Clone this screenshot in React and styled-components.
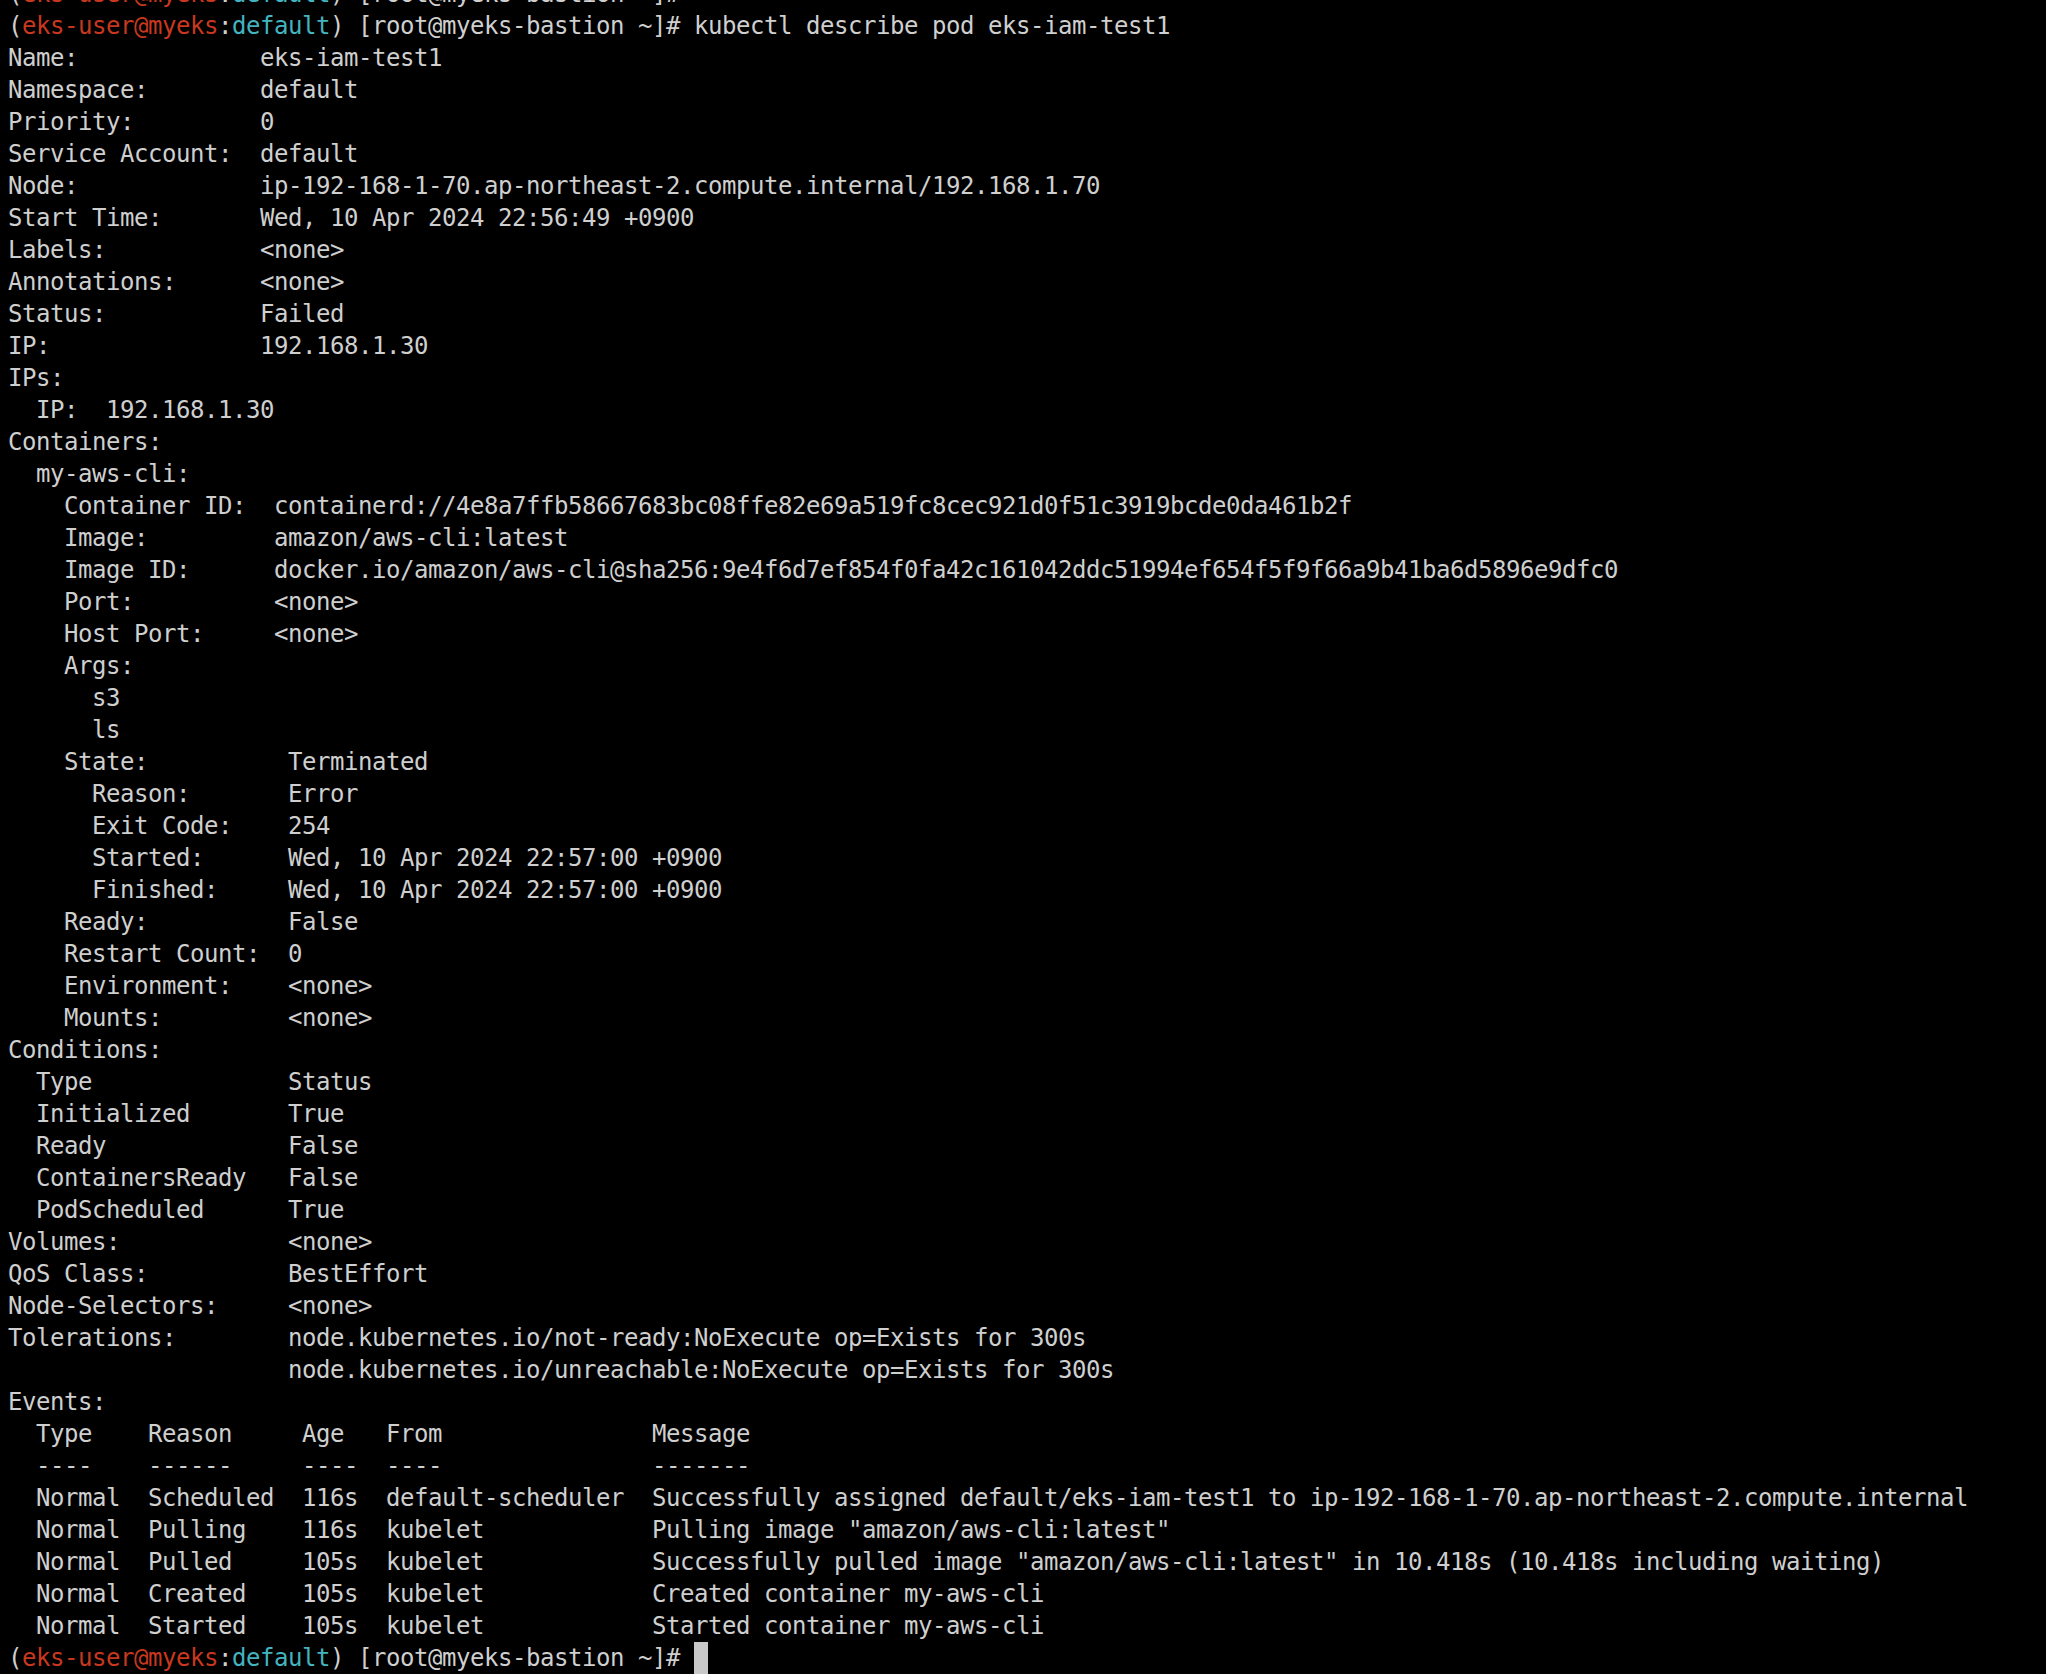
import React from 'react'
import styled, { createGlobalStyle } from 'styled-components'

const CELL = 14
const ROW = 32

const Global = createGlobalStyle`
  html, body {
    margin: 0;
    padding: 0;
    background: #000;
  }
`

const Screen = styled.main`
  box-sizing: border-box;
  height: 100vh;
  overflow: hidden;
  display: flex;
  flex-direction: column;
  justify-content: flex-end;
  padding: 0 8px;
  background: #000;
  color: #cfcfcf;
  font-family: "DejaVu Sans Mono", "Liberation Mono", monospace;
  font-size: 24px;
  letter-spacing: -0.449px;
  line-height: ${ROW}px;
`

const Line = styled.div`
  flex-shrink: 0;
  height: ${ROW}px;
  white-space: pre;
  padding-left: ${p => (p.$indent || 0) * CELL}px;
`

const Key = styled.span`
  display: inline-block;
  width: ${p => p.$cells * CELL}px;
`

const User = styled.span`
  color: #c8381f;
`

const Ctx = styled.span`
  color: #43b4bf;
`

const Cursor = styled.span`
  display: inline-block;
  vertical-align: top;
  width: ${CELL}px;
  height: ${ROW}px;
  background: #c8c8c8;
`

const EventRow = styled(Line)`
  display: grid;
  grid-template-columns: ${8 * CELL}px ${11 * CELL}px ${6 * CELL}px ${19 * CELL}px auto;
`

function Prompt({ children }) {
  return (
    <Line>
      (<User>eks-user@myeks</User>:<Ctx>default</Ctx>) [root@myeks-bastion ~]# {children}
    </Line>
  )
}

function Fields({ rows, indent = 0, cells }) {
  return rows.map(([k, v], i) => (
    <Line key={i} $indent={indent}>
      <Key $cells={cells}>{k}</Key>{v}
    </Line>
  ))
}

const pod = [
  ['Name:', 'eks-iam-test1'],
  ['Namespace:', 'default'],
  ['Priority:', '0'],
  ['Service Account:', 'default'],
  ['Node:', 'ip-192-168-1-70.ap-northeast-2.compute.internal/192.168.1.70'],
  ['Start Time:', 'Wed, 10 Apr 2024 22:56:49 +0900'],
  ['Labels:', '<none>'],
  ['Annotations:', '<none>'],
  ['Status:', 'Failed'],
  ['IP:', '192.168.1.30'],
]

const container = [
  ['Container ID:', 'containerd://4e8a7ffb58667683bc08ffe82e69a519fc8cec921d0f51c3919bcde0da461b2f'],
  ['Image:', 'amazon/aws-cli:latest'],
  ['Image ID:', 'docker.io/amazon/aws-cli@sha256:9e4f6d7ef854f0fa42c161042ddc51994ef654f5f9f66a9b41ba6d5896e9dfc0'],
  ['Port:', '<none>'],
  ['Host Port:', '<none>'],
]

const state = [
  ['Reason:', 'Error'],
  ['Exit Code:', '254'],
  ['Started:', 'Wed, 10 Apr 2024 22:57:00 +0900'],
  ['Finished:', 'Wed, 10 Apr 2024 22:57:00 +0900'],
]

const status = [
  ['Ready:', 'False'],
  ['Restart Count:', '0'],
  ['Environment:', '<none>'],
  ['Mounts:', '<none>'],
]

const conditions = [
  ['Type', 'Status'],
  ['Initialized', 'True'],
  ['Ready', 'False'],
  ['ContainersReady', 'False'],
  ['PodScheduled', 'True'],
]

const tail = [
  ['Volumes:', '<none>'],
  ['QoS Class:', 'BestEffort'],
  ['Node-Selectors:', '<none>'],
  ['Tolerations:', 'node.kubernetes.io/not-ready:NoExecute op=Exists for 300s'],
  ['', 'node.kubernetes.io/unreachable:NoExecute op=Exists for 300s'],
]

const events = [
  ['Type', 'Reason', 'Age', 'From', 'Message'],
  ['----', '------', '----', '----', '-------'],
  ['Normal', 'Scheduled', '116s', 'default-scheduler', 'Successfully assigned default/eks-iam-test1 to ip-192-168-1-70.ap-northeast-2.compute.internal'],
  ['Normal', 'Pulling', '116s', 'kubelet', 'Pulling image "amazon/aws-cli:latest"'],
  ['Normal', 'Pulled', '105s', 'kubelet', 'Successfully pulled image "amazon/aws-cli:latest" in 10.418s (10.418s including waiting)'],
  ['Normal', 'Created', '105s', 'kubelet', 'Created container my-aws-cli'],
  ['Normal', 'Started', '105s', 'kubelet', 'Started container my-aws-cli'],
]

export default function App() {
  return (
    <>
      <Global />
      <Screen>
        <Prompt />
        <Prompt>kubectl describe pod eks-iam-test1</Prompt>
        <Fields rows={pod} cells={18} />
        <Line>IPs:</Line>
        <Fields rows={[['IP:', '192.168.1.30']]} indent={2} cells={5} />
        <Line>Containers:</Line>
        <Line $indent={2}>my-aws-cli:</Line>
        <Fields rows={container} indent={4} cells={15} />
        <Line $indent={4}>Args:</Line>
        <Line $indent={6}>s3</Line>
        <Line $indent={6}>ls</Line>
        <Fields rows={[['State:', 'Terminated']]} indent={4} cells={16} />
        <Fields rows={state} indent={6} cells={14} />
        <Fields rows={status} indent={4} cells={16} />
        <Line>Conditions:</Line>
        <Fields rows={conditions} indent={2} cells={18} />
        <Fields rows={tail} cells={20} />
        <Line>Events:</Line>
        {events.map((row, i) => (
          <EventRow key={i} $indent={2}>
            {row.map((c, j) => <span key={j}>{c}</span>)}
          </EventRow>
        ))}
        <Prompt><Cursor /></Prompt>
      </Screen>
    </>
  )
}
